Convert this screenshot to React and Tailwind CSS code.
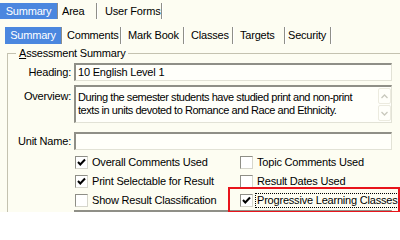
import React from 'react';

const topTabs = [
  { label: 'Summary', cls: 'w-[57px] justify-center', active: true },
  { label: 'Area', cls: 'w-[37px] pl-[3px]' },
  { label: 'User Forms', cls: 'w-[63px] pl-[7px]' },
];

const subTabs = [
  { label: 'Summary', cls: 'w-[56px] justify-center', active: true },
  { label: 'Comments', cls: 'w-[57px] pl-[4px]' },
  { label: 'Mark Book', cls: 'w-[61px] pl-[6px]' },
  { label: 'Classes', cls: 'w-[47px] pl-[6px]' },
  { label: 'Targets', cls: 'w-[50px] pl-[6px]' },
  { label: 'Security', cls: 'w-[44px] pl-[2px]' },
];

function Sep() {
  return <span className="w-[2px] h-full border-l border-[#8f8f88] border-r border-r-white" />;
}

function TabRow({ tabs, className }) {
  return (
    <div className={'flex items-stretch ' + className}>
      {tabs.map((t) => (
        <React.Fragment key={t.label}>
          <div
            className={
              'flex items-center ' +
              t.cls +
              (t.active ? ' bg-[#4b87df] text-white' : ' text-black')
            }
          >
            {t.label}
          </div>
          <Sep />
        </React.Fragment>
      ))}
    </div>
  );
}

function Box({ checked }) {
  return (
    <span className="w-[13px] h-[13px] shrink-0 bg-white border border-[#8e8e86] border-r-[#d6d6cc] border-b-[#d6d6cc] flex items-center justify-center">
      {checked && (
        <svg width="9" height="9" viewBox="0 0 9 9">
          <path d="M1 4 L3.3 6.5 L8 1.5" stroke="#000" strokeWidth="2" fill="none" />
        </svg>
      )}
    </span>
  );
}

function Check({ label, checked, focused }) {
  return (
    <div className="flex items-center h-[19px]">
      <Box checked={checked} />
      <span
        className={
          'ml-[2px] pl-[1px] pr-[2px] h-[15px] leading-[13px] border ' +
          (focused ? 'border-dotted border-black' : 'border-transparent')
        }
      >
        {label}
      </span>
    </div>
  );
}

const field =
  'bg-[#fffffa] border-t-2 border-l-2 border-[#8f8f87] border-b border-r border-b-[#e2e2d6] border-r-[#e2e2d6]';

function Chevron({ up }) {
  return (
    <svg width="7" height="5" viewBox="0 0 7 5">
      <path
        d={up ? 'M0.5 4 L3.5 1 L6.5 4' : 'M0.5 1 L3.5 4 L6.5 1'}
        stroke="#c9c9bd"
        strokeWidth="1.3"
        fill="none"
      />
    </svg>
  );
}

export default function App() {
  return (
    <div className="relative w-[400px] h-[212px] overflow-hidden bg-[#fdfdf2] text-black text-[11px] leading-[13px] tracking-[-0.2px] font-['Liberation_Sans',Arial,sans-serif]">
      <TabRow tabs={topTabs} className="h-[16px] mt-[3px]" />
      <TabRow tabs={subTabs} className="h-[17px] mt-[8px] ml-[5px]" />

      <fieldset className="mt-[3px] ml-[7px] w-[420px] border border-[#c4c2b0] pt-[3px]">
        <legend className="ml-[8px] px-[3px] leading-[13px]">
          <span className="underline">A</span>ssessment Summary
        </legend>

        <div className="flex items-center h-[18px]">
          <span className="w-[63px] text-right">Heading:</span>
          <div className={'ml-[3px] w-[318px] h-full flex items-center pl-[2px] ' + field}>
            10 English Level 1
          </div>
        </div>

        <div className="flex mt-[4px] h-[38px]">
          <span className="w-[63px] text-right pt-[5px]">Overview:</span>
          <div className={'ml-[3px] w-[318px] h-full flex ' + field}>
            <p className="flex-1 pl-[2px] pt-[4px] tracking-[-0.45px]">
              During the semester students have studied print and non-print
              <br />
              texts in units devoted to Romance and Race and Ethnicity.
            </p>
            <div className="w-[13px] flex flex-col gap-[1px] py-[1px]">
              <span className="flex-1 flex items-center justify-center border border-[#ecebdf] rounded-[2px]">
                <Chevron up />
              </span>
              <span className="flex-1 flex items-center justify-center border border-[#ecebdf] rounded-[2px]">
                <Chevron />
              </span>
            </div>
          </div>
        </div>

        <div className="flex items-center mt-[9px] h-[18px]">
          <span className="w-[63px] text-right">Unit Name:</span>
          <div className={'ml-[3px] w-[318px] h-full ' + field} />
        </div>

        <div className="grid grid-cols-[165px_1fr] ml-[67px] mt-[3px]">
          <Check label="Overall Comments Used" checked />
          <Check label="Topic Comments Used" />
          <Check label="Print Selectable for Result" checked />
          <Check label="Result Dates Used" />
          <Check label="Show Result Classification" />
          <Check label="Progressive Learning Classes" checked focused />
        </div>

        <div className="flex items-center h-[18px]">
          <span className="w-[63px]" />
          <div className={'ml-[3px] w-[318px] h-full ' + field} />
        </div>
      </fieldset>

      <div className="absolute left-[228px] top-[187px] w-[172px] h-[26px] border-2 border-[#e8141c]" />
    </div>
  );
}
